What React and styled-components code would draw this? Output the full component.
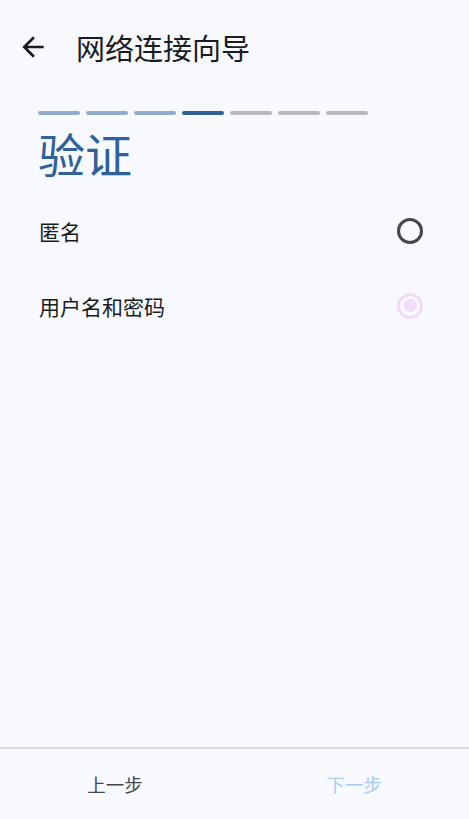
import React from "react";
import styled, { createGlobalStyle } from "styled-components";

const Global = createGlobalStyle`
  html, body { margin: 0; padding: 0; background: #f7f9ff; }
  body { font-family: "Noto Sans CJK SC", "Noto Sans", sans-serif; }
  * { box-sizing: border-box; }
`;

const Page = styled.div`
  height: 819px;
  display: flex;
  flex-direction: column;
  background: #f7f9ff;
  color: #1a1c1e;
`;

const Header = styled.header`
  height: 94px;
  display: flex;
  align-items: center;
  padding-left: 17px;
  gap: 27px;
`;

const BackButton = styled.button`
  width: 32px;
  height: 32px;
  padding: 0;
  border: none;
  background: none;
  display: flex;
  align-items: center;
  justify-content: center;
  color: #1a1c1e;
`;

const Title = styled.h1`
  margin: 0;
  font-size: 29px;
  font-weight: 400;
  line-height: 1.2;
  color: #1a1c1e;
`;

const Content = styled.main`
  flex: 1;
  padding: 17px 46px 0 38px;
  display: flex;
  flex-direction: column;
`;

const Steps = styled.div`
  display: flex;
  gap: 5.6px;
`;

const Step = styled.span`
  width: 42.4px;
  height: 4px;
  border-radius: 2px;
  background: ${(p) =>
    p.$state === "done" ? "#8fadcb" : p.$state === "current" ? "#2e6298" : "#b8b9bb"};
`;

const Heading = styled.h2`
  margin: 10px 0 0;
  font-size: 47px;
  font-weight: 400;
  line-height: 1.2;
  color: #2e6298;
`;

const Options = styled.div`
  margin-top: 12px;
  display: flex;
  flex-direction: column;
`;

const OptionRow = styled.label`
  height: 75px;
  display: flex;
  align-items: center;
  justify-content: space-between;
  padding-left: 1px;
  font-size: 21px;
  color: #1a1c1e;
`;

const Radio = styled.span`
  width: 26px;
  height: 26px;
  border-radius: 50%;
  border: 3px solid ${(p) => (p.$checked ? "#f3d9fa" : "#44474e")};
  display: flex;
  align-items: center;
  justify-content: center;
  &::after {
    content: "";
    display: ${(p) => (p.$checked ? "block" : "none")};
    width: 13px;
    height: 13px;
    border-radius: 50%;
    background: #f3d9fa;
  }
`;

const Footer = styled.footer`
  height: 72px;
  border-top: 2px solid #dadce1;
  display: flex;
  align-items: center;
  justify-content: space-between;
  padding: 0 67px;
`;

const FooterButton = styled.button`
  width: 96px;
  height: 40px;
  border: none;
  background: none;
  padding: 0;
  font-family: "Noto Sans CJK SC", "Noto Sans", sans-serif;
  font-size: 18.5px;
  color: ${(p) => (p.$disabled ? "#a6cbf7" : "#44474e")};
`;

const steps = ["done", "done", "done", "current", "todo", "todo", "todo"];

export default function App() {
  return (
    <>
      <Global />
      <Page>
        <Header>
          <BackButton aria-label="返回">
            <svg width="32" height="32" viewBox="0 0 24 24" fill="currentColor">
              <path d="M20 11H7.83l5.59-5.59L12 4l-8 8 8 8 1.41-1.41L7.83 13H20v-2z" />
            </svg>
          </BackButton>
          <Title>网络连接向导</Title>
        </Header>
        <Content>
          <Steps>
            {steps.map((s, i) => (
              <Step key={i} $state={s} />
            ))}
          </Steps>
          <Heading>验证</Heading>
          <Options>
            <OptionRow>
              匿名
              <Radio />
            </OptionRow>
            <OptionRow>
              用户名和密码
              <Radio $checked />
            </OptionRow>
          </Options>
        </Content>
        <Footer>
          <FooterButton>上一步</FooterButton>
          <FooterButton $disabled>下一步</FooterButton>
        </Footer>
      </Page>
    </>
  );
}
